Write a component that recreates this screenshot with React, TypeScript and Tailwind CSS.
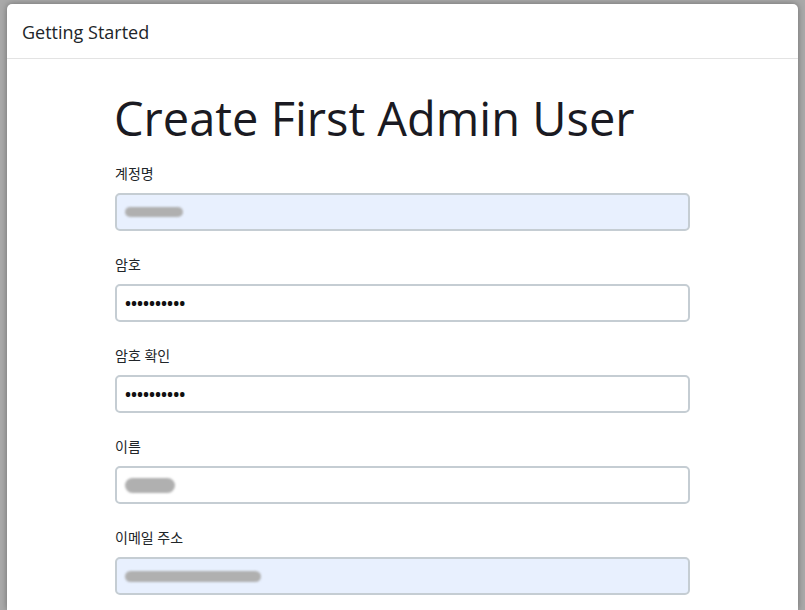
import React from "react";

const font = { fontFamily: '"Open Sans", "Noto Sans CJK KR", sans-serif' };

interface FieldProps {
  label: string;
  filled?: boolean;
  children: React.ReactNode;
}

const Field = ({ label, filled, children }: FieldProps) => (
  <div className="flex flex-col">
    <label className="text-[14px] leading-[20px] text-[#212529] mb-[9px]">{label}</label>
    <div
      className={`h-[38px] rounded-[5px] border-2 border-[#c5cdd3] flex items-center px-[8px] ${
        filled ? "bg-[#e8f0fe]" : "bg-white"
      }`}
    >
      {children}
    </div>
  </div>
);

const Blur = ({ w, h = 12 }: { w: number; h?: number }) => (
  <span
    className="block rounded-full bg-[#b0b0b0] blur-[1px]"
    style={{ width: w, height: h }}
  />
);

const Dots = () => (
  <span className="text-[#111] text-[16px] leading-none font-bold">••••••••••</span>
);

export default function App() {
  return (
    <div className="w-[805px] h-[610px] bg-[#a9a9a9] pt-[4px] px-[7px] overflow-hidden" style={font}>
      <div className="h-full bg-white rounded-t-[5px] shadow-[0_0_6px_rgba(0,0,0,0.35)]">
        <div className="h-[55px] border-b border-[#e3e3e3] flex items-center px-[15px] pt-[3px]">
          <span className="text-[18px] text-[#212529]">Getting Started</span>
        </div>
        <div className="w-[575px] mx-auto pt-[31px] flex flex-col gap-[24px]">
          <h1 className="text-[47px] leading-[56px] text-[#1a1a22] -ml-[1px] mb-[-6px]">
            Create First Admin User
          </h1>
          <Field label="계정명" filled>
            <Blur w={58} h={10} />
          </Field>
          <Field label="암호">
            <Dots />
          </Field>
          <Field label="암호 확인">
            <Dots />
          </Field>
          <Field label="이름">
            <Blur w={50} h={15} />
          </Field>
          <Field label="이메일 주소" filled>
            <Blur w={136} h={11} />
          </Field>
        </div>
      </div>
    </div>
  );
}
